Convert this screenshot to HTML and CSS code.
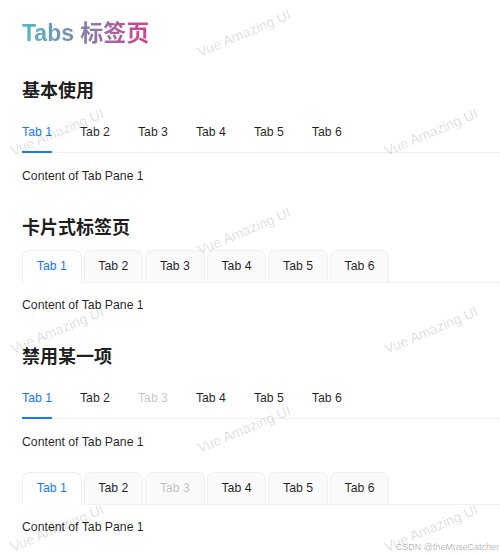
FILE: index.html
```html
<!DOCTYPE html>
<html lang="zh-CN">
<head>
<meta charset="utf-8">
<title>Tabs 标签页</title>
<link rel="stylesheet" href="styles.css">
</head>
<body>
<div class="page">
  <h1 class="title">Tabs 标签页</h1>

  <h2 class="heading">基本使用</h2>
  <div class="tabs tabs-line">
    <div class="nav">
      <div class="tab active">Tab 1<span class="ink"></span></div>
      <div class="tab">Tab 2</div>
      <div class="tab">Tab 3</div>
      <div class="tab">Tab 4</div>
      <div class="tab">Tab 5</div>
      <div class="tab">Tab 6</div>
    </div>
    <div class="pane">Content of Tab Pane 1</div>
  </div>

  <h2 class="heading">卡片式标签页</h2>
  <div class="tabs tabs-card">
    <div class="nav">
      <div class="tab active">Tab 1</div>
      <div class="tab">Tab 2</div>
      <div class="tab">Tab 3</div>
      <div class="tab">Tab 4</div>
      <div class="tab">Tab 5</div>
      <div class="tab">Tab 6</div>
    </div>
    <div class="pane">Content of Tab Pane 1</div>
  </div>

  <h2 class="heading">禁用某一项</h2>
  <div class="tabs tabs-line">
    <div class="nav">
      <div class="tab active">Tab 1<span class="ink"></span></div>
      <div class="tab">Tab 2</div>
      <div class="tab disabled">Tab 3</div>
      <div class="tab">Tab 4</div>
      <div class="tab">Tab 5</div>
      <div class="tab">Tab 6</div>
    </div>
    <div class="pane">Content of Tab Pane 1</div>
  </div>

  <div class="tabs tabs-card tabs-spaced">
    <div class="nav">
      <div class="tab active">Tab 1</div>
      <div class="tab">Tab 2</div>
      <div class="tab disabled">Tab 3</div>
      <div class="tab">Tab 4</div>
      <div class="tab">Tab 5</div>
      <div class="tab">Tab 6</div>
    </div>
    <div class="pane">Content of Tab Pane 1</div>
  </div>

  <div class="watermark">
    <div class="wm"></div><div class="wm"><span>Vue Amazing UI</span></div><div class="wm"></div>
    <div class="wm"><span>Vue Amazing UI</span></div><div class="wm"></div><div class="wm"><span>Vue Amazing UI</span></div>
    <div class="wm"></div><div class="wm"><span>Vue Amazing UI</span></div><div class="wm"></div>
    <div class="wm"><span>Vue Amazing UI</span></div><div class="wm"></div><div class="wm"><span>Vue Amazing UI</span></div>
    <div class="wm"></div><div class="wm"><span>Vue Amazing UI</span></div><div class="wm"></div>
    <div class="wm"><span>Vue Amazing UI</span></div><div class="wm"></div><div class="wm"><span>Vue Amazing UI</span></div>
  </div>

  <div class="csdn">CSDN @theMuseCatcher</div>
</div>
</body>
</html>
```

FILE: styles.css
```css
html, body {
  margin: 0;
  padding: 0;
  background: #ffffff;
}

.page {
  position: relative;
  width: 500px;
  height: 556px;
  overflow: hidden;
  box-sizing: border-box;
  padding: 17px 0 0 22px;
  font-family: "Liberation Sans", "Noto Sans CJK SC", sans-serif;
  font-size: 12.25px;
  color: rgba(0, 0, 0, 0.88);
}

.title {
  margin: 0 0 4.5px;
  width: fit-content;
  font-size: 23px;
  line-height: 32px;
  font-weight: 700;
  background-image: linear-gradient(90deg, #4fb9c5 0%, #7f86ac 45%, #a463a3 70%, #d43f88 100%);
  -webkit-background-clip: text;
  background-clip: text;
  color: transparent;
}

.heading {
  margin: 30px 0 10px;
  font-size: 18px;
  line-height: 24px;
  font-weight: 600;
  color: rgba(0, 0, 0, 0.9);
}

.nav {
  display: flex;
  border-bottom: 1px solid #f0f0f0;
}

.tab {
  line-height: 19px;
  white-space: nowrap;
}

.tab.active {
  color: #1677ff;
}

.tab.disabled {
  color: rgba(0, 0, 0, 0.25);
}

.tabs-line .nav {
  gap: 28px;
}

.tabs-line .tab {
  position: relative;
  padding: 10px 0;
}

.ink {
  position: absolute;
  left: 0;
  right: 0;
  bottom: -1px;
  height: 2px;
  background: #1677ff;
}

.tabs-card .nav {
  gap: 2px;
}

.tabs-card .tab {
  padding: 6px 13.8px;
  margin-bottom: -1px;
  border: 1px solid #f0f0f0;
  border-radius: 7px 7px 0 0;
  background: #fafafa;
}

.tabs-card .tab.active {
  background: #ffffff;
  border-bottom-color: #ffffff;
}

.tabs-spaced {
  margin-top: 20px;
}

.pane {
  margin-top: 13.5px;
  line-height: 19px;
}

.watermark {
  position: absolute;
  left: -36.5px;
  top: -16.5px;
  display: grid;
  grid-template-columns: repeat(3, 187px);
  grid-auto-rows: 99px;
  pointer-events: none;
}

.wm {
  display: flex;
  align-items: center;
  justify-content: center;
}

.wm span {
  display: block;
  transform: rotate(-23deg);
  font-family: "Liberation Sans", sans-serif;
  font-size: 14px;
  line-height: 16px;
  white-space: nowrap;
  color: rgba(0, 0, 0, 0.14);
}

.csdn {
  position: absolute;
  right: 1px;
  bottom: 3px;
  font-family: "Liberation Sans", sans-serif;
  font-size: 9px;
  line-height: 11px;
  color: rgba(0, 0, 0, 0.32);
  text-shadow: 0 0 1px #fff;
}
```
